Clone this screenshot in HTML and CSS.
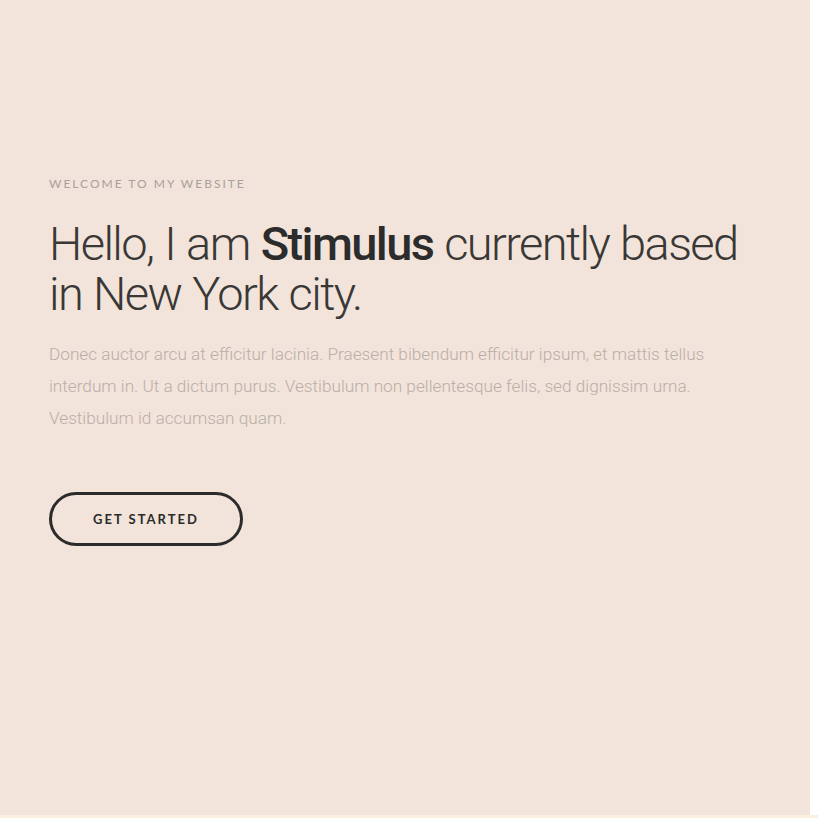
FILE: index.html
```html
<!DOCTYPE html>
<html lang="en">
<head>
<meta charset="utf-8">
<title>Stimulus</title>
<link rel="stylesheet" href="styles.css">
</head>
<body>
<section class="hero">
  <div class="hero-inner">
    <p class="eyebrow">Welcome to my website</p>
    <h1 class="title">Hello, I am <strong>Stimulus</strong> currently based in New York city.</h1>
    <p class="lead">Donec auctor arcu at efficitur lacinia. Praesent bibendum efficitur ipsum, et mattis tellus interdum in. Ut a dictum purus. Vestibulum non pellentesque felis, sed dignissim urna. Vestibulum id accumsan quam.</p>
    <a class="btn" href="#">Get Started</a>
  </div>
</section>
<div class="bottom-strip"></div>
</body>
</html>
```
FILE: styles.css
```css
html, body {
  margin: 0;
  padding: 0;
  background: #ffffff;
}
body {
  font-family: "Roboto", "Lato", sans-serif;
  width: 818px;
  height: 818px;
  overflow: hidden;
}
.hero {
  width: 810px;
  height: 815px;
  background: #f2e4da;
  box-sizing: border-box;
  padding: 176px 0 0 49px;
}
.hero-inner {
  width: 712px;
  display: flex;
  flex-direction: column;
  align-items: flex-start;
}
.eyebrow {
  margin: 0;
  font-family: "Lato", sans-serif;
  font-size: 12px;
  line-height: 16px;
  letter-spacing: 2px;
  text-transform: uppercase;
  color: #a9a19b;
  font-weight: 400;
}
.title {
  margin: 27px 0 0;
  font-size: 47px;
  line-height: 50px;
  font-weight: 300;
  letter-spacing: -1.6px;
  word-spacing: 1px;
  color: #3a3836;
}
.title strong {
  font-weight: 500;
  color: #2c2c2c;
}
.lead {
  margin: 19px 0 0;
  font-size: 17.2px;
  line-height: 32px;
  font-weight: 300;
  color: #baaea7;
}
.btn {
  margin-top: 58px;
  box-sizing: border-box;
  width: 194px;
  height: 54px;
  border: 3px solid #2b2b2b;
  border-radius: 27px;
  display: flex;
  align-items: center;
  justify-content: center;
  font-family: "Lato", sans-serif;
  font-size: 13px;
  font-weight: 700;
  letter-spacing: 2px;
  text-transform: uppercase;
  color: #2b2b2b;
  text-decoration: none;
}
.bottom-strip {
  width: 818px;
  height: 3px;
  background: #fbf0e0;
}
```
